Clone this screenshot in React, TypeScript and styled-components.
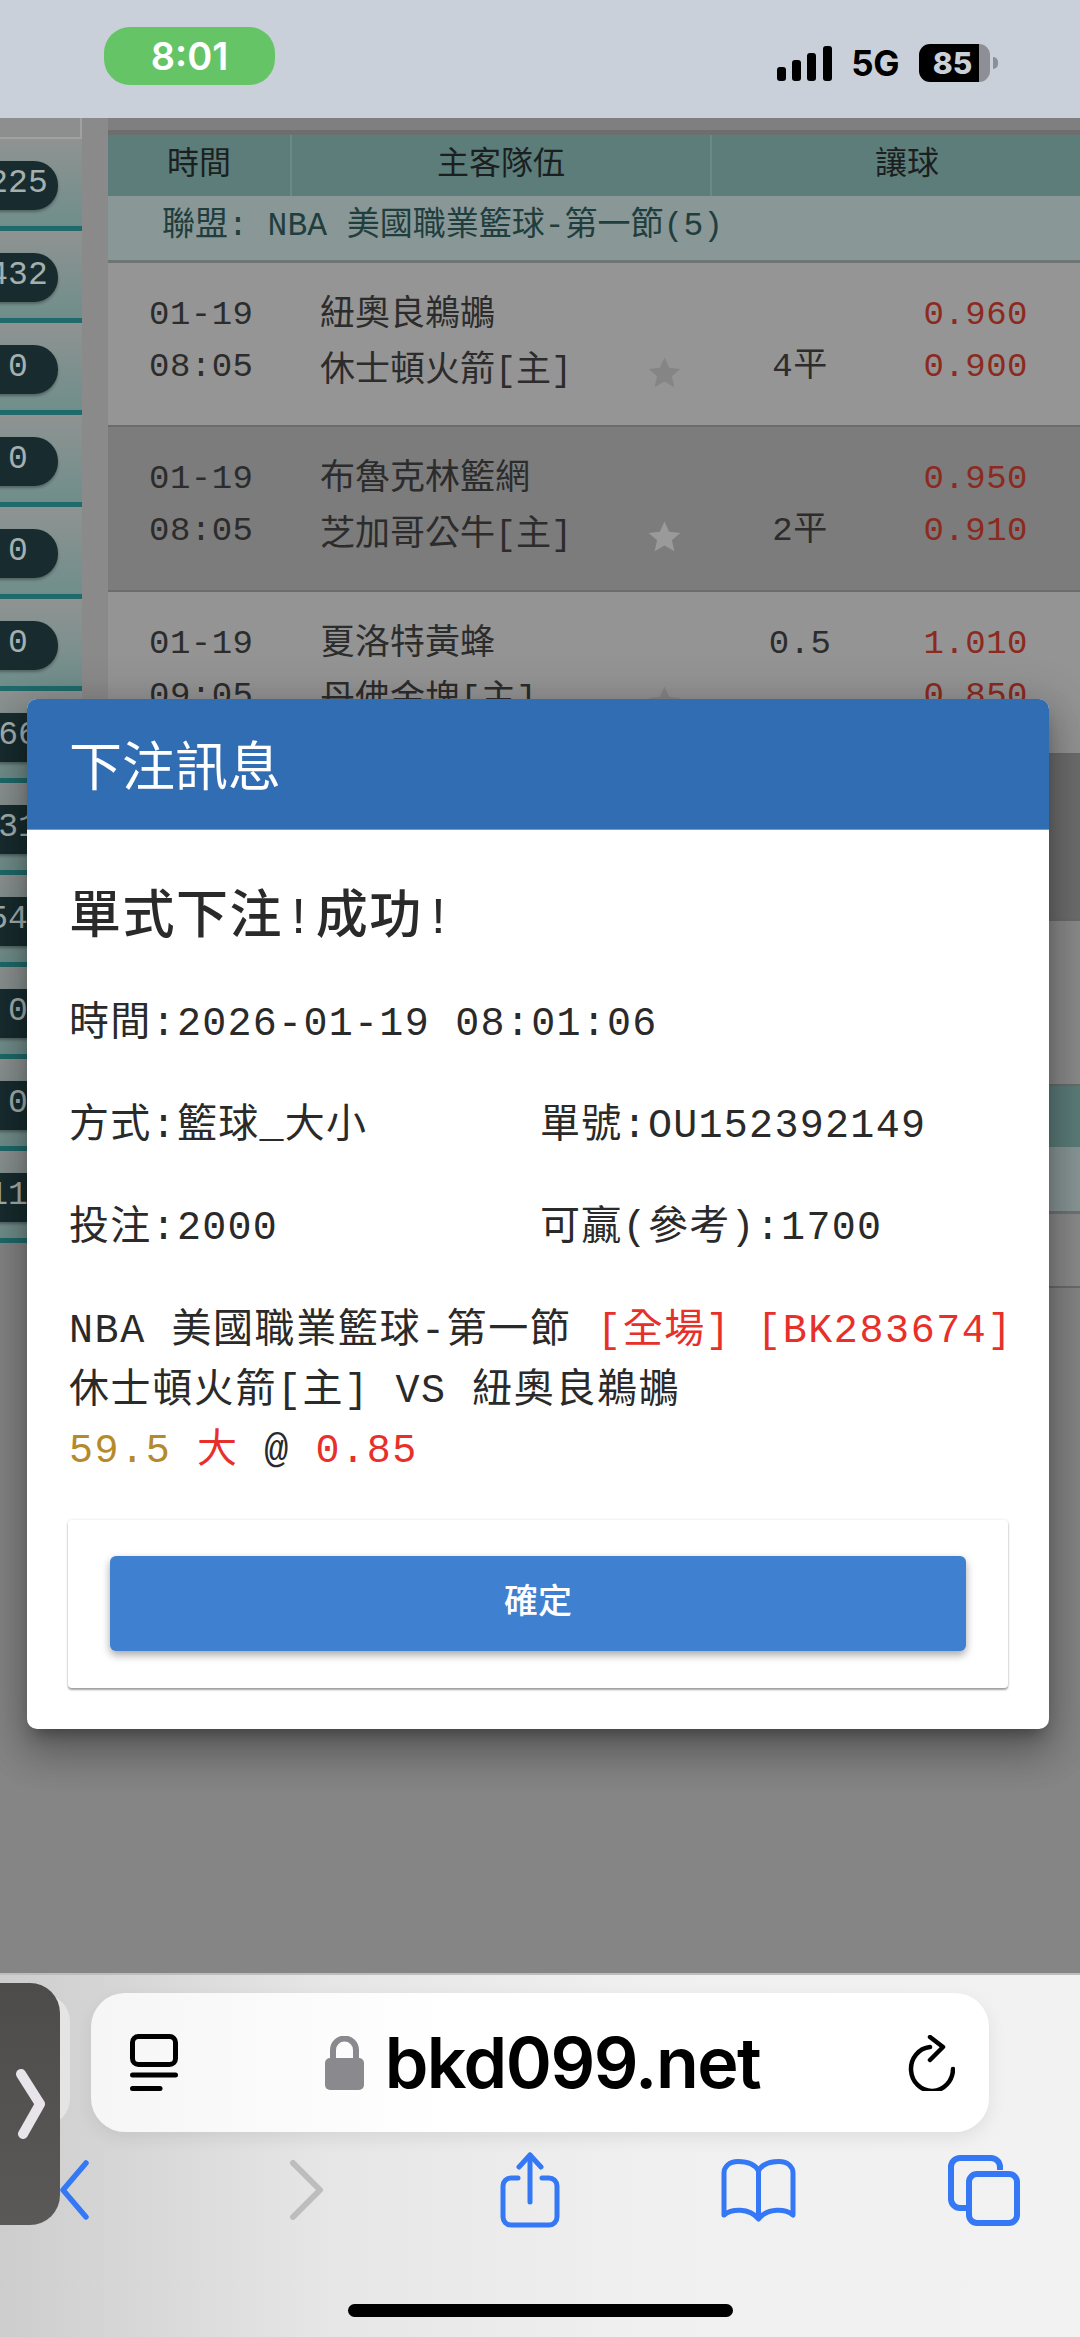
import styled, { createGlobalStyle } from 'styled-components';

const MONO = `'Liberation Mono', 'Noto Sans CJK TC', monospace`;
const SANS = `'Noto Sans CJK TC', 'Noto Sans', sans-serif`;
const BLUE = '#3478f6';

const GlobalStyle = createGlobalStyle`
  html, body {
    margin: 0;
    padding: 0;
    background: #858585;
  }
  * {
    box-sizing: border-box;
  }
`;

const Screen = styled.div`
  position: relative;
  width: 1080px;
  height: 2337px;
  overflow: hidden;
  display: flex;
  flex-direction: column;
  font-family: ${MONO};
`;

/* status bar */
const StatusBar = styled.div`
  height: 118px;
  flex: none;
  background: #c9d0d9;
  display: flex;
  justify-content: space-between;
  padding: 27px 90px 0 104px;
`;
const TimePill = styled.div`
  width: 171px;
  height: 58px;
  border-radius: 26px;
  background: #65c466;
  color: #fff;
  font: 600 38px/58px Inter, sans-serif;
  text-align: center;
`;
const StatusRight = styled.div`
  display: flex;
  align-items: center;
  height: 38px;
  margin-top: 17px;
`;
const NetworkLabel = styled.span`
  font: 700 35px/38px Inter, sans-serif;
  letter-spacing: -0.5px;
  color: #000;
  margin: 0 20px 0 19px;
`;
const Battery = styled.div`
  position: relative;
  width: 71px;
  height: 38px;
  border-radius: 11px;
  background: linear-gradient(90deg, #000 0 85%, #8e8e96 85% 100%);
  color: #c9d0d9;
  font: 800 30px/38px Inter, sans-serif;
  text-align: center;
  padding-right: 4px;
  &::after {
    content: '';
    position: absolute;
    left: 74px;
    top: 13px;
    width: 5px;
    height: 12px;
    border-radius: 0 6px 6px 0;
    background: #8e8e96;
  }
`;

/* page behind the dialog */
const Page = styled.div`
  flex: 1;
  display: flex;
  align-items: flex-start;
  min-height: 0;
`;
const Sidebar = styled.div`
  width: 82px;
  flex: none;
  overflow: hidden;
`;
const SidebarTop = styled.div`
  height: 21px;
  background: #8d8f8e;
  border-right: 2px solid #a0a2a1;
  border-bottom: 2px solid #a0a2a1;
`;
const SidebarCell = styled.div`
  height: 92px;
  padding-top: 22px;
  background: linear-gradient(180deg, #8f9392, #6f8e8b);
  border-bottom: 5px solid #206a6b;
`;
const CountPill = styled.div`
  width: 80px;
  height: 49px;
  margin-left: -22px;
  border-radius: 24px;
  background: #182c2f;
  box-shadow: 0 2px 3px rgba(0, 0, 0, 0.3);
  color: #a4b0b0;
  font: 33px/46px ${MONO};
  text-align: center;
`;
const Gutter = styled.div`
  width: 26px;
  flex: none;
  height: 1857px;
  background: linear-gradient(180deg, #8a8a8a 0 1170px, #858585 1170px);
`;
const Content = styled.div`
  flex: 1;
`;
const TopStrip = styled.div`
  height: 17px;
  background: #7f7f7f;
  border-bottom: 5px solid #6e6e6e;
`;
const TableHead = styled.div`
  height: 61px;
  display: grid;
  grid-template-columns: 182px 420px 1fr;
  background: #5c7d7a;
`;
const HeadCell = styled.div<{ $inset?: number }>`
  color: #1b1f1f;
  font: 32px/50px ${SANS};
  text-align: center;
  padding-left: ${(p) => p.$inset ?? 0}px;
  & + & {
    border-left: 2px solid #6b8a87;
  }
`;
const LeagueRow = styled.div`
  height: 67px;
  padding-left: 54px;
  background: #899796;
  border-bottom: 3px solid #6f7474;
  color: #1f3e3d;
  font: 33px/62px ${MONO};
  white-space: pre;
`;
const MatchRow = styled.div<{ $shade: string; $height: number }>`
  height: ${(p) => p.$height}px;
  padding: 26px 52px 0 41px;
  background: ${(p) => p.$shade};
  border-bottom: 2px solid #6c6c6c;
  display: grid;
  grid-template-columns: 171px 327px 35px 1fr 110px;
  grid-auto-rows: 52px;
  font-size: 34px;
  letter-spacing: 0.5px;
  line-height: 52px;
  color: #2c2c2c;
  white-space: nowrap;
`;
const TeamName = styled.div<{ $second?: boolean }>`
  font-size: 35px;
  letter-spacing: 0;
  padding-top: ${(p) => (p.$second ? 5 : 1)}px;
`;
const Handicap = styled.div`
  text-align: center;
`;
const Odds = styled.div`
  text-align: right;
  color: #8c2a1f;
`;
const StarIcon = styled.svg`
  width: 35px;
  height: 33px;
  margin-top: 15px;
`;

/* dialog */
const Dialog = styled.div`
  position: absolute;
  left: 27px;
  top: 699px;
  width: 1022px;
  height: 1030px;
  background: #fff;
  border-radius: 10px;
  overflow: hidden;
  box-shadow: 0 11px 15px -7px rgba(0, 0, 0, 0.3), 0 24px 38px 3px rgba(0, 0, 0, 0.2), 0 9px 46px 8px rgba(0, 0, 0, 0.18);
`;
const DialogHeader = styled.div`
  height: 131px;
  padding: 30px 42px 0;
  background: #316db3;
  border-bottom: 1px solid #6f9bd0;
  color: #fff;
  font: 400 53px/68px ${SANS};
`;
const DialogBody = styled.div`
  padding: 56px 42px 0;
  color: #2a2a2a;
  font-size: 40px;
  letter-spacing: 1.3px;
`;
const ResultTitle = styled.div`
  font: 500 52px/68px ${MONO};
  letter-spacing: 1.5px;
  margin-bottom: 43px;
`;
const InfoGrid = styled.div`
  display: grid;
  grid-template-columns: 471px 1fr;
  grid-auto-rows: 102px;
`;
const InfoLine = styled.div<{ $wide?: boolean }>`
  line-height: 56px;
  white-space: pre;
  grid-column: ${(p) => (p.$wide ? '1 / 3' : 'auto')};
`;
const MatchText = styled.div`
  line-height: 60px;
  letter-spacing: 1.6px;
  white-space: pre;
  margin-top: -1px;
`;
const Tint = styled.span<{ $color: string }>`
  color: ${(p) => p.$color};
`;
const ConfirmCard = styled.div`
  margin: 38px -1px 0;
  height: 168px;
  padding: 36px 42px 0;
  background: #fff;
  border-radius: 4px;
  box-shadow: 0 2px 2px rgba(0, 0, 0, 0.35), 0 0 3px rgba(0, 0, 0, 0.12);
`;
const ConfirmButton = styled.button`
  display: block;
  width: 100%;
  height: 95px;
  border: 0;
  border-radius: 6px;
  background: #3f81d0;
  box-shadow: 0 4px 8px rgba(0, 0, 0, 0.35);
  color: #fff;
  font: 500 34px/85px ${SANS};
  padding: 0 0 14px 0;
`;

/* safari toolbar */
const Toolbar = styled.div`
  height: 364px;
  flex: none;
  background: linear-gradient(90deg, #cdcdcd 0, #e6e6e6 30%, #f0f0f0 60%, #f2f2f2 100%);
  border-top: 2px solid #bdbdbd;
  padding-top: 18px;
  overflow: hidden;
`;
const AddressBar = styled.div`
  width: 898px;
  height: 139px;
  margin-left: 91px;
  padding: 0 34px 0 39px;
  border-radius: 34px;
  background: linear-gradient(90deg, #f6f6f6, #fff 40%);
  box-shadow: 0 6px 18px rgba(0, 0, 0, 0.08);
  display: flex;
  align-items: center;
  justify-content: space-between;
`;
const UrlGroup = styled.div`
  display: flex;
  align-items: center;
  gap: 21px;
`;
const UrlText = styled.span`
  font: 600 70px/70px Inter, sans-serif;
  letter-spacing: -1.5px;
  color: #000;
`;
const NavRow = styled.div`
  display: grid;
  grid-template-columns: repeat(4, 228px) 224px;
  justify-items: center;
  align-items: center;
  height: 76px;
  margin: 20px 0 0 -40px;
`;
const HomeIndicator = styled.div`
  width: 385px;
  height: 13px;
  margin: 76px auto 0;
  border-radius: 7px;
  background: #000;
`;
const PeekTab = styled.div`
  position: absolute;
  left: 0;
  top: 1995px;
  width: 70px;
  height: 130px;
  border-radius: 0 26px 26px 0;
  background: #e4e4e4;
`;
const FloatingHandle = styled.div`
  position: absolute;
  left: 0;
  top: 1983px;
  width: 60px;
  height: 242px;
  border-radius: 0 30px 30px 0;
  background: linear-gradient(180deg, #4e4c4a, #5b5957);
  display: flex;
  align-items: center;
  padding-left: 15px;
`;

const rows = [
  { date: '01-19', time: '08:05', away: '紐奧良鵜鶘', home: '休士頓火箭[主]', top: '', bottom: '4平', oddsA: '0.960', oddsB: '0.900', shade: '#959595', star: '#858585', height: 164 },
  { date: '01-19', time: '08:05', away: '布魯克林籃網', home: '芝加哥公牛[主]', top: '', bottom: '2平', oddsA: '0.950', oddsB: '0.910', shade: '#7c7c7c', star: '#9a9a9a', height: 165 },
  { date: '01-19', time: '09:05', away: '夏洛特黃蜂', home: '丹佛金塊[主]', top: '0.5', bottom: '', oddsA: '1.010', oddsB: '0.850', shade: '#949494', star: '#858585', height: 163 },
];
const counts = ['225', '432', '0', '0', '0', '0', '1660', '1310', '540', '0', '0', '110'];

function App() {
  return (
    <Screen>
      <GlobalStyle />
      <StatusBar>
        <TimePill>8:01</TimePill>
        <StatusRight>
          <svg width="55" height="35" viewBox="0 0 55 35" fill="#000">
            <rect x="0" y="21" width="9" height="14" rx="3" />
            <rect x="15" y="14" width="9" height="21" rx="3" />
            <rect x="30" y="7" width="9" height="28" rx="3" />
            <rect x="46" y="0" width="9" height="35" rx="3" />
          </svg>
          <NetworkLabel>5G</NetworkLabel>
          <Battery>85</Battery>
        </StatusRight>
      </StatusBar>

      <Page>
        <Sidebar>
          <SidebarTop />
          {counts.map((count, i) => (
            <SidebarCell key={i}>
              <CountPill>{count}</CountPill>
            </SidebarCell>
          ))}
        </Sidebar>
        <Gutter />
        <Content>
          <TopStrip />
          <TableHead>
            <HeadCell>時間</HeadCell>
            <HeadCell>主客隊伍</HeadCell>
            <HeadCell $inset={22}>讓球</HeadCell>
          </TableHead>
          <LeagueRow>聯盟: NBA 美國職業籃球-第一節(5)</LeagueRow>
          {rows.map((row) => (
            <MatchRow key={row.away} $shade={row.shade} $height={row.height}>
              <div>{row.date}</div>
              <TeamName>{row.away}</TeamName>
              <div />
              <Handicap>{row.top}</Handicap>
              <Odds>{row.oddsA}</Odds>
              <div>{row.time}</div>
              <TeamName $second>{row.home}</TeamName>
              <StarIcon viewBox="0 0 24 24" fill={row.star}>
                <path d="M12 1l3.4 7.6 8.1.8-6.1 5.4 1.8 8L12 18.6 4.8 22.800l1.800-8L.5 9.400l8.100-.8z" />
              </StarIcon>
              <Handicap>{row.bottom}</Handicap>
              <Odds>{row.oddsB}</Odds>
            </MatchRow>
          ))}
          <MatchRow $shade="#6e6e6e" $height={166} />
          <MatchRow $shade="#8b8b8b" $height={165} />
          <TableHead />
          <LeagueRow />
          <MatchRow $shade="#8b8b8b" $height={74} />
        </Content>
      </Page>

      <Toolbar>
        <AddressBar>
          <svg width="48" height="57" viewBox="0 0 48 57" fill="none" stroke="#000" strokeWidth="5" strokeLinecap="round">
            <rect x="2.500" y="2.500" width="43" height="28" rx="6" />
            <path d="M2.500 41H45.500" />
            <path d="M2.500 54.500H30" />
          </svg>
          <UrlGroup>
            <svg width="39" height="54" viewBox="0 0 39 54">
              <path d="M8 26V14a11.500 11.500 0 0 1 23 0V26" fill="none" stroke="#8a8a8e" strokeWidth="6" />
              <rect x="0" y="22" width="39" height="32" rx="5" fill="#8a8a8e" />
            </svg>
            <UrlText>bkd099.net</UrlText>
          </UrlGroup>
          <svg width="48" height="56" viewBox="0 0 48 56" fill="none" stroke="#000" strokeWidth="4.500" strokeLinecap="round" strokeLinejoin="round">
            <path d="M23 12A21 22 0 1 0 46 34" />
            <path d="M23 2L36 12L23 25" />
          </svg>
        </AddressBar>
        <NavRow>
          <svg width="30" height="60" viewBox="0 0 30 60" fill="none" stroke={BLUE} strokeWidth="5.500" strokeLinecap="round" strokeLinejoin="round">
            <path d="M27 3L4 30L27 57" />
          </svg>
          <svg width="50" height="60" viewBox="0 0 50 60" fill="none" stroke="#bdbdbd" strokeWidth="6" strokeLinecap="round" strokeLinejoin="round">
            <path d="M16 3L43 30L16 57" />
          </svg>
          <svg width="60" height="76" viewBox="0 0 60 76" fill="none" stroke={BLUE} strokeWidth="5" strokeLinecap="round" strokeLinejoin="round">
            <path d="M30 50V3" />
            <path d="M19 15L30 3L41 15" />
            <path d="M18 26H11a8 8 0 0 0-8 8V65a8 8 0 0 0 8 8H49a8 8 0 0 0 8-8V34a8 8 0 0 0-8-8H42" />
          </svg>
          <svg width="75" height="63" viewBox="0 0 75 63" fill="none" stroke={BLUE} strokeWidth="5" strokeLinejoin="round">
            <path d="M37.500 60V12C34 5 27 2.500 17 2.500C8 2.500 3 8 3 14V56C10 50 28 48 37.500 60C47 48 65 50 72 56V14C72 8 67 2.500 58 2.500C48 2.500 41 5 37.500 12" />
          </svg>
          <svg width="72" height="71" viewBox="0 0 72 71" fill="none" stroke={BLUE} strokeWidth="6">
            <path d="M52 15V12a9 9 0 0 0-9-9H12a9 9 0 0 0-9 9V44a9 9 0 0 0 9 9h6" />
            <rect x="21" y="19" width="48" height="49" rx="8" />
          </svg>
        </NavRow>
        <HomeIndicator />
      </Toolbar>

      <Dialog>
        <DialogHeader>下注訊息</DialogHeader>
        <DialogBody>
          <ResultTitle>單式下注!成功!</ResultTitle>
          <InfoGrid>
            <InfoLine $wide>時間:2026-01-19 08:01:06</InfoLine>
            <InfoLine>方式:籃球_大小</InfoLine>
            <InfoLine>單號:OU152392149</InfoLine>
            <InfoLine>投注:2000</InfoLine>
            <InfoLine>可贏(參考):1700</InfoLine>
          </InfoGrid>
          <MatchText>
            NBA 美國職業籃球-第一節 <Tint $color="#e8302a">[全場] [BK283674]</Tint>
            {'\n'}休士頓火箭[主] VS 紐奧良鵜鶘
            {'\n'}<Tint $color="#b58a2c">59.5</Tint> <Tint $color="#e8302a">大</Tint> @ <Tint $color="#e8302a">0.85</Tint>
          </MatchText>
          <ConfirmCard>
            <ConfirmButton>確定</ConfirmButton>
          </ConfirmCard>
        </DialogBody>
      </Dialog>

      <PeekTab />
      <FloatingHandle>
        <svg width="31" height="72" viewBox="0 0 31 72" fill="none" stroke="#e8e4ea" strokeWidth="10" strokeLinecap="round" strokeLinejoin="round">
          <path d="M6 6L25 36L8 66" />
        </svg>
      </FloatingHandle>
    </Screen>
  );
}

export default App;
